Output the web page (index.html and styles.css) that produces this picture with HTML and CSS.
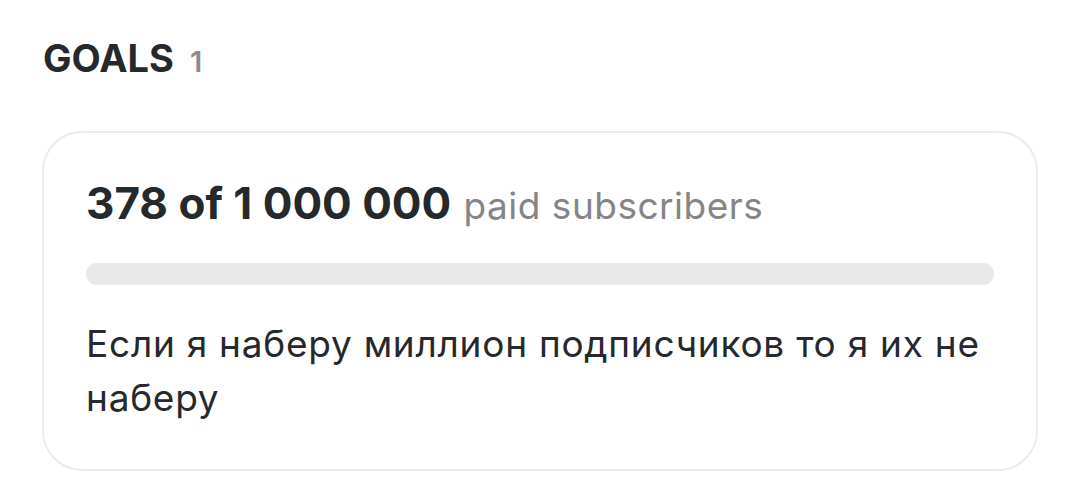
FILE: index.html
```html
<!DOCTYPE html>
<html lang="ru">
<head>
    <meta charset="UTF-8">
    <title>Goals</title>
    <link rel="stylesheet" href="styles.css">
</head>
<body>
    <div class="page">
        <h2 class="section-title">GOALS <span class="count">1</span></h2>

        <!-- карточка цели -->
        <div class="goal-card">
            <p class="goal-progress">
                <span class="goal-numbers">378 of 1 000 000</span>
                <span class="goal-unit">paid subscribers</span>
            </p>
            <!-- 378 из миллиона — заливки почти не видно -->
            <div class="bar"></div>
            <p class="goal-text">Если я наберу миллион подписчиков то я их не наберу</p>
        </div>
    </div>
</body>
</html>
```

FILE: styles.css
```css
body {
    margin: 0;
    font-family: Inter, "Noto Sans", Arial, sans-serif;
    background-color: #fff;
    color: #25292c;
}

.page {
    padding: 36px 42px 0;
}

.section-title {
    margin: 0 0 49px 1px;
    font-size: 38px;
    line-height: 1.2;
    font-weight: 700;
}

.count {
    margin-left: 7px;
    font-size: 29px;
    font-weight: 600;
    color: #8c8c8c;
}

.goal-card {
    border: 2px solid #ebebeb;
    border-radius: 40px;
    padding: 45px 42px 44px 42px;
}

.goal-progress {
    margin: 0;
    font-size: 44px;
    line-height: 50px;
}

.goal-numbers {
    font-weight: 700;
}

.goal-unit {
    font-size: 37px;
    line-height: 1;
    letter-spacing: 0.5px;
    color: #858585;
}

.bar {
    margin-top: 35px;
    height: 22px;
    border-radius: 11px;
    background-color: #e9e9e9;
}

.goal-text {
    margin: 32px 0 0;
    font-size: 37px;
    line-height: 54px;
    letter-spacing: 0.75px;
}
```
